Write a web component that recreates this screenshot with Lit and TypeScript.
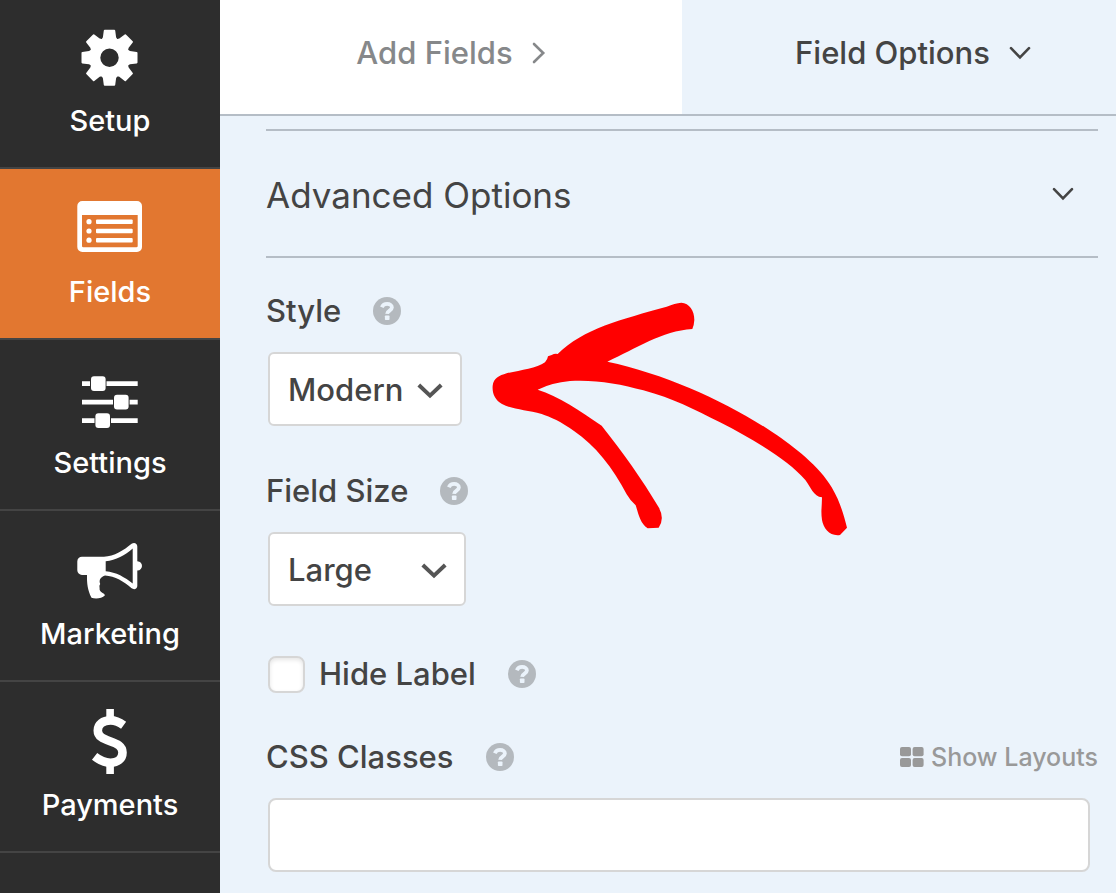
import { LitElement, html, css, svg, type TemplateResult } from "lit";
import { customElement, property, state } from "lit/decorators.js";
import { classMap } from "lit/directives/class-map.js";

interface NavItem {
  id: string;
  label: string;
  icon: TemplateResult;
}

const gearTeeth = [0, 45, 90, 135, 180, 225, 270, 315];

const navItems: NavItem[] = [
  {
    id: "setup",
    label: "Setup",
    icon: svg`
      <circle cx="33.5" cy="33.7" r="14.7" fill="none" stroke="currentColor" stroke-width="11" />
      ${gearTeeth.map(
        (a) => svg`<path transform=${`translate(33.5 33.7) rotate(${a})`} d="M-4.8-28H4.8Q5.5-28 5.7-27.2L6.6-20.5 8.6-17H-8.6L-6.6-20.5-5.7-27.2Q-5.5-28-4.8-28Z" />`
      )}`,
  },
  {
    id: "fields",
    label: "Fields",
    icon: svg`
      <path fill-rule="evenodd" d="M6.3 6H61a5 5 0 0 1 5 5V52a5 5 0 0 1-5 5H6.3a5 5 0 0 1-5-5V11a5 5 0 0 1 5-5ZM6 20V51a1.3 1.3 0 0 0 1.3 1.3H60.4a1.3 1.3 0 0 0 1.3-1.3V20Z" />
      <circle cx="13" cy="26.7" r="2.6" /><circle cx="13" cy="36" r="2.6" /><circle cx="13" cy="45.2" r="2.6" />
      <rect x="20" y="24.4" width="36.7" height="4.6" rx="1" />
      <rect x="20" y="33.7" width="36.7" height="4.6" rx="1" />
      <rect x="20" y="42.9" width="36.7" height="4.6" rx="1" />`,
  },
  {
    id: "settings",
    label: "Settings",
    icon: svg`
      <path d="M6 15.3h8v4.7H6zM30.5 15.3h31.2v4.7H30.5zM6 33.8h31v4.7H6zM53.6 33.8h8.1v4.7h-8.1zM6 52.3h12.5v4.7H6zM35 52.3h26.7v4.7H35z" />
      <rect x="15" y="10.3" width="14.6" height="14.6" rx="3" />
      <rect x="38" y="28.8" width="14.6" height="14.6" rx="3" />
      <rect x="19.4" y="47.3" width="14.6" height="14.6" rx="3" />`,
  },
  {
    id: "marketing",
    label: "Marketing",
    icon: svg`
      <path fill-rule="evenodd" d="M6 19.7H28C38 19.4 48 13 55.6 6.7C58 5 61.3 6 61.3 9.5V24.2C67.6 24.6 67.6 33.2 61.3 33.6V49C61.3 52 58 53 55.6 51.3C48 44.5 39 39.3 29 38.6C23.5 40.5 23 44 24.2 47C22.6 49 24 50.5 23.6 52.5C24 55.5 29.5 56.5 28.8 58.5C26 61.8 19 62 15.5 60.8C11.5 53 10.8 46 11 38H6A4.7 4.7 0 0 1 1.3 33.3V24.4A4.7 4.7 0 0 1 6 19.7ZM29.7 24.2V34.2C40 35 49 40.3 56.7 46.5V11.5C49 18 40 23.5 29.7 24.2Z" />`,
  },
  {
    id: "payments",
    label: "Payments",
    icon: svg`
      <rect x="30.3" y="1" width="7.6" height="11" /><rect x="30.3" y="55" width="7.6" height="11" />
      <path fill="none" stroke="currentColor" stroke-width="8.6" d="M47.6 17.2C43.5 14.2 39 12.4 34.5 12.4C27 12.4 21.8 16.5 21.8 22.4C21.8 28.5 27 30.8 34 33.2C41 35.6 46.5 38 46.5 44.5C46.5 51 41.5 54.7 34.5 54.7C28.5 54.7 23.5 52.2 18.6 48.4" />`,
  },
];

@customElement("help-tip")
export class HelpTip extends LitElement {
  @property() topic = "";

  static styles = css`
    :host {
      display: inline-flex;
    }
    .tip {
      display: flex;
      padding: 0;
      border: 0;
      background: none;
      color: #b4b9be;
      cursor: pointer;
    }
  `;

  render() {
    return html`<button class="tip" type="button" aria-label=${`Help: ${this.topic}`}>
      <svg width="28" height="28" viewBox="0 0 28 28" aria-hidden="true">
        <circle cx="14" cy="14" r="14" fill="currentColor" />
        <path d="M8.8 10.2C9.8 8 11.8 6.9 14.1 6.9C16.9 6.9 18.9 8.4 18.9 10.6C18.9 13.6 14.3 13.6 14.1 16.8" fill="none" stroke="#ebf3fb" stroke-width="3.8" />
        <rect x="11.9" y="18.4" width="4.6" height="4.6" rx="0.8" fill="#ebf3fb" />
      </svg>
    </button>`;
  }
}

@customElement("app-root")
export class AppRoot extends LitElement {
  @state() private active = "fields";

  static styles = css`
    :host {
      display: flex;
      min-height: 100vh;
      overflow: hidden;
      background: #ebf3fb;
      color: #444;
      font: 500 31px/40px Inter, "Liberation Sans", sans-serif;
    }
    * {
      box-sizing: border-box;
    }
    button,
    select,
    input {
      font: inherit;
      color: inherit;
      margin: 0;
    }
    .sidebar {
      flex: none;
      width: 220px;
      margin-top: -2px;
      background: #2d2d2d;
    }
    .nav-item {
      display: flex;
      flex-direction: column;
      align-items: center;
      gap: 11px;
      width: 100%;
      padding: 26px 0 28px;
      border: 0;
      border-bottom: 2px solid #444;
      background: none;
      color: #fff;
      font-size: 29px;
      line-height: 36px;
      cursor: pointer;
    }
    .nav-item.active {
      background: #e27730;
    }
    .nav-icon {
      width: 68px;
      height: 68px;
      fill: currentColor;
    }
    .panel {
      position: relative;
      flex: 1;
      min-width: 0;
    }
    .tabs {
      display: grid;
      grid-template-columns: 1fr 1fr;
      margin-right: -28px;
      border-bottom: 2px solid #b5bdc6;
    }
    .tab {
      display: flex;
      align-items: center;
      justify-content: center;
      gap: 19px;
      padding: 33px 0 41px;
      border: 0;
      background: #fff;
      color: #86888a;
      cursor: pointer;
    }
    .tab.current {
      background: #ebf3fb;
      color: #444;
    }
    .line-icon {
      fill: none;
      stroke: currentColor;
      stroke-width: 2.6;
      stroke-linecap: round;
    }
    .options {
      padding: 13px 18px 20px 46px;
    }
    .section {
      margin: 0 0 33px;
      border: solid #b5bdc6;
      border-width: 2px 0;
      font: inherit;
    }
    .section-toggle {
      display: flex;
      align-items: center;
      justify-content: space-between;
      width: 100%;
      padding: 42px 24px 39px 0;
      border: 0;
      background: none;
      font-size: 35px;
      font-weight: 400;
      line-height: 44px;
      cursor: pointer;
    }
    .section-toggle .line-icon {
      margin-bottom: 3px;
    }
    .field {
      margin-bottom: 45px;
    }
    .field-head {
      display: flex;
      align-items: center;
      gap: 32px;
    }
    .stacked {
      margin-bottom: 21px;
    }
    .check-row {
      margin: 48px 0 43px;
    }
    .select-box {
      display: inline-grid;
      align-items: center;
      margin-left: 2px;
      vertical-align: top;
    }
    .select {
      grid-area: 1 / 1;
      appearance: none;
      height: 74px;
      padding: 2px 56px 0 18px;
      border: 2px solid #d6d6d6;
      border-radius: 6px;
      background: #fff;
    }
    .select-arrow {
      grid-area: 1 / 1;
      justify-self: end;
      margin: 4px 19px 0 0;
      fill: none;
      stroke: #555;
      stroke-width: 4;
      pointer-events: none;
    }
    .check-label {
      display: flex;
      align-items: center;
      gap: 14px;
    }
    .check {
      appearance: none;
      width: 37px;
      height: 37px;
      margin-left: 2px;
      border: 2px solid #d6d6d6;
      border-radius: 8px;
      background: #fff;
      box-shadow: inset 0 2px 4px rgba(0, 0, 0, 0.1);
    }
    .check:checked {
      background: #e27730;
    }
    .layouts {
      display: flex;
      align-items: center;
      gap: 7px;
      margin-left: auto;
      color: #999;
      font-size: 25px;
      text-decoration: none;
    }
    .text-box {
      display: block;
      width: calc(100% - 10px);
      height: 74px;
      margin-left: 2px;
      padding: 0 18px;
      border: 2px solid #d6d6d6;
      border-radius: 8px;
      background: #fff;
    }
    .pointer {
      position: absolute;
      left: 260px;
      top: 290px;
      width: 380px;
      height: 260px;
      fill: #f00;
      pointer-events: none;
    }
  `;

  private chevronDown() {
    return html`<svg class="line-icon" width="22" height="14" viewBox="0 0 22 14" aria-hidden="true">
      <path d="M2 2.2 11 11.4 20 2.2" />
    </svg>`;
  }

  private renderSelect(id: string, label: string, choices: string[]) {
    return html`<div class="field">
      <div class="field-head stacked">
        <label for=${id}>${label}</label>
        <help-tip topic=${label}></help-tip>
      </div>
      <div class="select-box">
        <select class="select" id=${id}>
          ${choices.map((c, i) => html`<option ?selected=${i === 0}>${c}</option>`)}
        </select>
        <svg class="select-arrow" width="26" height="16" viewBox="0 0 26 16" aria-hidden="true">
          <path d="M1.8 2 13 12.6 24.2 2" />
        </svg>
      </div>
    </div>`;
  }

  render() {
    return html`
      <nav class="sidebar" aria-label="Form builder">
        ${navItems.map(
          (item) => html`<button
            type="button"
            class=${classMap({ "nav-item": true, active: item.id === this.active })}
            @click=${() => (this.active = item.id)}
          >
            <svg class="nav-icon" viewBox="0 0 68 68" aria-hidden="true">${item.icon}</svg>
            <span>${item.label}</span>
          </button>`
        )}
      </nav>
      <main class="panel">
        <div class="tabs" role="tablist">
          <button class="tab" type="button" role="tab" aria-selected="false">
            Add Fields
            <svg class="line-icon" width="14" height="22" viewBox="0 0 14 22" aria-hidden="true">
              <path d="M2 2 11.2 11 2 20" />
            </svg>
          </button>
          <button class="tab current" type="button" role="tab" aria-selected="true">
            Field Options ${this.chevronDown()}
          </button>
        </div>
        <div class="options">
          <h2 class="section">
            <button class="section-toggle" type="button" aria-expanded="true">
              Advanced Options ${this.chevronDown()}
            </button>
          </h2>
          ${this.renderSelect("style", "Style", ["Modern", "Classic"])}
          ${this.renderSelect("size", "Field Size", ["Large", "Medium", "Small"])}
          <div class="field-head check-row">
            <label class="check-label"><input class="check" type="checkbox" />Hide Label</label>
            <help-tip topic="Hide Label"></help-tip>
          </div>
          <div class="field-head stacked">
            <label for="css">CSS Classes</label>
            <help-tip topic="CSS Classes"></help-tip>
            <a class="layouts" href="#layouts">
              <svg width="24" height="20" viewBox="0 0 24 20" fill="currentColor" aria-hidden="true">
                <rect width="11" height="9.3" rx="2" /><rect x="12.6" width="11" height="9.3" rx="2" />
                <rect y="10.9" width="11" height="9.1" rx="2" /><rect x="12.6" y="10.9" width="11" height="9.1" rx="2" />
              </svg>
              Show Layouts
            </a>
          </div>
          <input class="text-box" id="css" type="text" />
        </div>
        <svg class="pointer" viewBox="0 0 1140 780" aria-hidden="true">
          <path d="M233 192C310 115 425 88 560 50Q585 39 604 38C628 40 643 60 643 90Q642 107 637 117C545 123 470 175 382 215C560 253 740 335 880 428C940 468 1020 530 1055 592C1080 635 1090 670 1101 713L1080 735C1050 740 1030 715 1026 690C1022 665 1026 645 1026 622C1000 620 992 590 976 570C925 510 820 448 720 397C640 357 580 325 490 301C420 281 340 268 270 273Q215 278 173 299C235 318 300 362 365 407C430 490 485 565 536 652Q555 685 536 713L503 715C480 700 475 670 467 646Q450 631 440 613C400 535 345 465 282 423C245 396 210 380 185 372C140 360 95 358 66 342C45 330 36 310 38 287C41 264 57 257 80 250C120 241 170 235 195 217Q203 208 204 199L215 195Q224 190 233 192Z" />
        </svg>
      </main>
    `;
  }
}
